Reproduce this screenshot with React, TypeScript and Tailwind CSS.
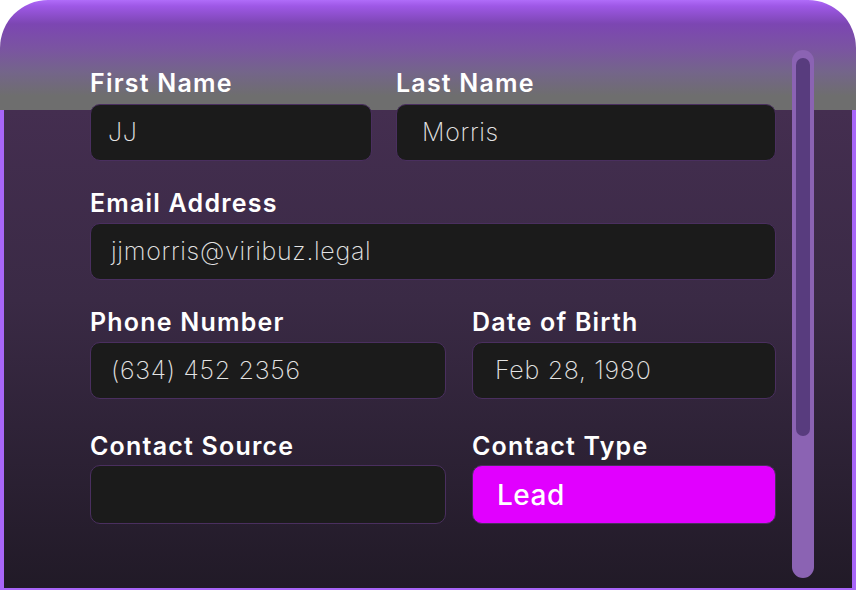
import React from "react";

const font = { fontFamily: "Inter, 'Open Sans', sans-serif" };

function Field({
  label,
  value,
  pad = "pl-[20px]",
  gap = "mb-[5px]",
  h = "h-[57px]",
  accent = false,
}: {
  label: string;
  value?: string;
  pad?: string;
  gap?: string;
  h?: string;
  accent?: boolean;
}) {
  return (
    <div className="flex flex-col">
      <label className={`text-[25px] leading-[30px] font-semibold text-white tracking-[1.2px] ${gap}`}>
        {label}
      </label>
      {accent ? (
        <div className={`${h} rounded-[10px] border border-[#4a2f5f] bg-[#e100ff] flex items-center ${pad}`}>
          <span className="text-[28px] font-medium text-white tracking-[0.5px]">{value}</span>
        </div>
      ) : (
        <div className={`${h} rounded-[10px] border border-[#4a2f5f] bg-[#1b1b1b] flex items-center ${pad}`}>
          <span className="text-[25px] font-extralight text-[#e4e4e4] tracking-[0.7px]">{value}</span>
        </div>
      )}
    </div>
  );
}

export default function App() {
  return (
    <div className="w-[856px] h-[590px] bg-white overflow-hidden" style={font}>
      {/* Card: header band + purple frame */}
      <div className="h-[590px] rounded-t-[48px] overflow-hidden px-[4px] bg-[linear-gradient(to_bottom,#b06cf9_0px,#9e58e6_6px,#7c46b2_24px,#7a55a0_50px,#74658a_72px,#6e6e6e_96px,#6e6e6e_110px,#a866f8_110px)]">
        {/* Body panel */}
        <div className="h-[588px] flex gap-[16px] pl-[86px] pr-[38px] bg-[linear-gradient(to_bottom,transparent_110px,#442e50_110px,#3a2a45_300px,#211a27_588px)]">
          {/* Form */}
          <div className="flex-1 pt-[68px] flex flex-col">
            <div className="grid grid-cols-[282px_1fr] gap-[24px]">
              <Field label="First Name" value="JJ" pad="pl-[17px]" gap="mb-[6px]" />
              <Field label="Last Name" value="Morris" pad="pl-[25px]" gap="mb-[6px]" />
            </div>
            <div className="mt-[27px]">
              <Field label="Email Address" value="jjmorris@viribuz.legal" />
            </div>
            <div className="mt-[27px] grid grid-cols-[356px_1fr] gap-[26px]">
              <Field label="Phone Number" value="(634) 452 2356" />
              <Field label="Date of Birth" value="Feb 28, 1980" pad="pl-[22px]" />
            </div>
            <div className="mt-[32px] grid grid-cols-[356px_1fr] gap-[26px]">
              <Field label="Contact Source" value="" gap="mb-[4px]" h="h-[59px]" />
              <Field label="Contact Type" value="Lead" pad="pl-[24px]" gap="mb-[4px]" h="h-[59px]" accent />
            </div>
          </div>
          {/* Scrollbar */}
          <div className="pt-[50px]">
            <div className="w-[22px] h-[528px] rounded-full bg-[#8b63b3] pt-[8px] flex justify-center">
              <div className="w-[14px] h-[378px] rounded-full bg-[#583c7e]" />
            </div>
          </div>
        </div>
      </div>
    </div>
  );
}
